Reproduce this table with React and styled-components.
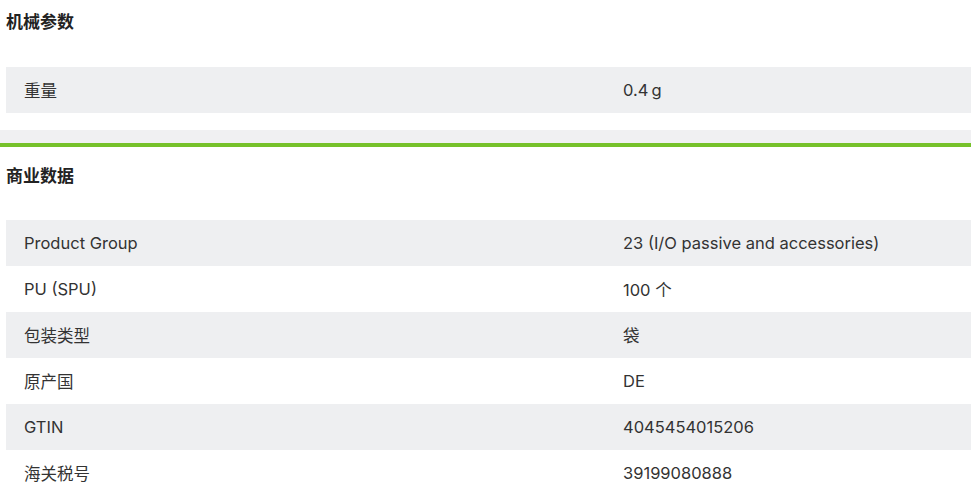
import React from 'react';
import styled, { createGlobalStyle } from 'styled-components';

const Global = createGlobalStyle`
    body {
        margin: 0;
        background: #fff;
        font-family: Inter, "Noto Sans CJK SC", sans-serif;
        color: #333;
    }
`;

const Page = styled.div`
    width: 971px;
`;

const Section = styled.section`
    padding: ${p => p.top}px 0 0 6px;
`;

const Heading = styled.h3`
    margin: 0;
    font-size: 17px;
    line-height: 24px;
    font-weight: 700;
    color: #222;
`;

const Table = styled.div`
    margin-top: ${p => p.gap}px;
`;

const Row = styled.div`
    display: grid;
    grid-template-columns: 599px 1fr;
    height: 46px;
    align-items: center;
    background: ${p => (p.shaded ? '#eeeff1' : '#fff')};
    font-size: 16.5px;
    color: #333;
`;

const Cell = styled.div`
    padding-left: 18px;
`;

const Divider = styled.div`
    margin-top: 17px;
    height: 13px;
    background: #f0f0f2;
    border-bottom: 4px solid #76c12a;
`;

const mech = [['重量', '0.4\u2009g']];

const commerce = [
    ['Product Group', '23 (I/O passive and accessories)'],
    ['PU (SPU)', '100 个'],
    ['包装类型', '袋'],
    ['原产国', 'DE'],
    ['GTIN', '4045454015206'],
    ['海关税号', '39199080888'],
];

const DataTable = ({ rows, gap }) => (
    <Table gap={gap}>
        {rows.map(([k, v], i) => (
            <Row key={k} shaded={i % 2 === 0}>
                <Cell>{k}</Cell>
                <Cell>{v}</Cell>
            </Row>
        ))}
    </Table>
);

export default function App() {
    return (
        <Page>
            <Global />
            <Section top={10}>
                <Heading>机械参数</Heading>
                <DataTable rows={mech} gap={33} />
            </Section>
            <Divider />
            <Section top={17}>
                <Heading>商业数据</Heading>
                <DataTable rows={commerce} gap={32} />
            </Section>
        </Page>
    );
}
